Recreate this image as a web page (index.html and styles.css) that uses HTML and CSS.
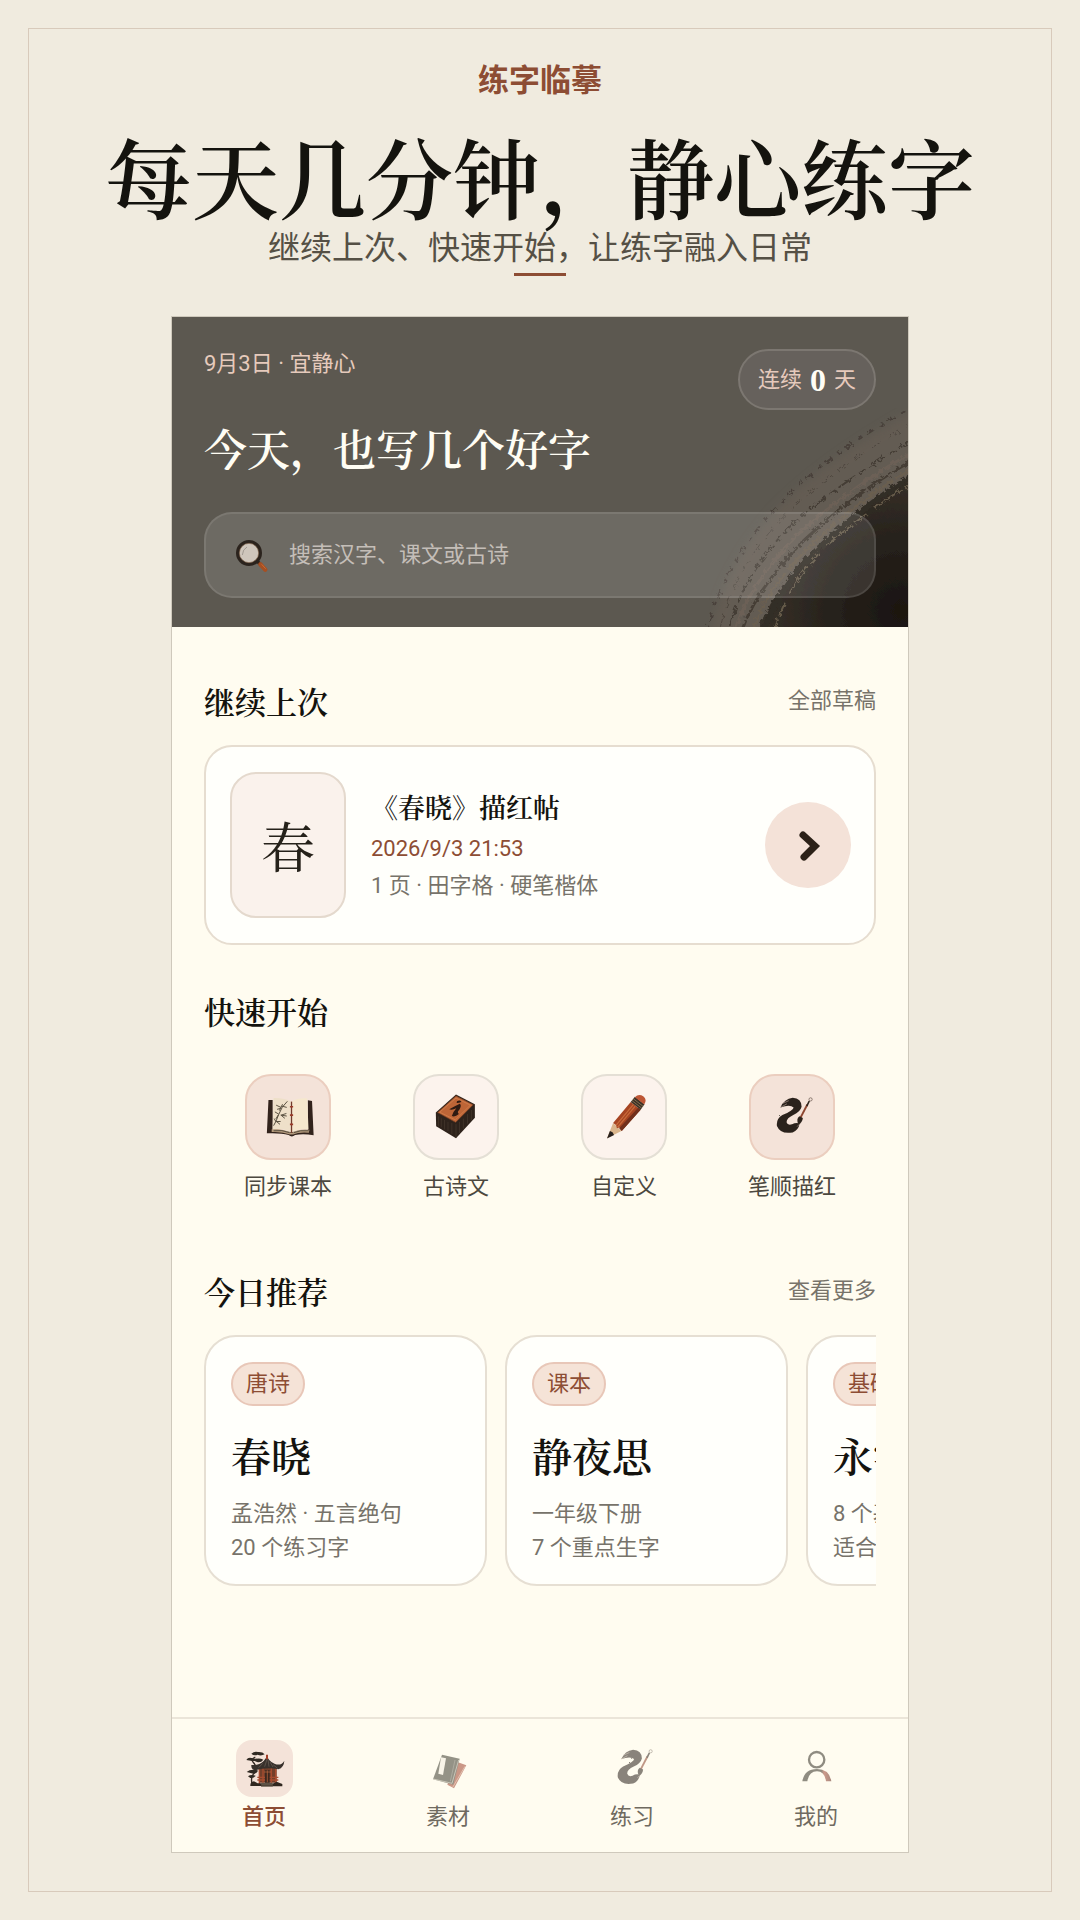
FILE: index.html
```html
<!DOCTYPE html>
<html lang="zh-CN">
<head>
<meta charset="utf-8">
<meta name="viewport" content="width=device-width, initial-scale=1">
<title>练字临摹</title>
<link rel="stylesheet" href="styles.css">
</head>
<body>
<svg class="sprite" aria-hidden="true">
  <defs>
    <filter id="rough" x="-10%" y="-10%" width="120%" height="120%">
      <feTurbulence type="fractalNoise" baseFrequency="0.15" numOctaves="2" seed="4" result="n"/>
      <feDisplacementMap in="SourceGraphic" in2="n" scale="5"/>
    </filter>
    <symbol id="brush" viewBox="0 0 256 256">
      <g filter="url(#rough)">
        <path d="M92 98Q104 71 130 68Q158 70 158 96Q154 112 132 122Q111 132 111 144Q115 156 128 151Q140 144 152 148Q148 169 130 176Q92 183 81 156Q78 134 98 122Q133 107 133 98Q122 88 92 98Z" fill="#2c231c"/>
      </g>
      <path d="M92 98L112 87M98 86L118 77M144 158L154 147" stroke="#b5a094" stroke-width="2"/>
      <path d="M153 133L176 89" stroke="#8d4630" stroke-width="6"/>
      <path d="M174 94L182 78" stroke="#2c231c" stroke-width="5"/>
      <path d="M148 152Q140 134 151 126L162 131Q160 146 148 152Z" fill="#2c231c"/>
      <circle cx="186" cy="73" r="5" fill="none" stroke="#5a4a40" stroke-width="2"/>
    </symbol>
  </defs>
</svg>
<div class="poster">
  <header class="intro">
    <p class="brand">练字临摹</p>
    <h1 class="headline">每天几分钟，静心练字</h1>
    <p class="tagline">继续上次、快速开始，让练字融入日常</p>
    <span class="rule"></span>
  </header>

  <main class="phone">
    <section class="hero">
      <svg class="ink" viewBox="0 0 737 311" preserveAspectRatio="xMaxYMax slice" aria-hidden="true">
        <defs>
          <radialGradient id="inkDark" gradientUnits="userSpaceOnUse" cx="730" cy="295" r="155">
            <stop offset="0" stop-color="#1a1510"/><stop offset=".5" stop-color="#28231d"/><stop offset="1" stop-color="#3b352d"/>
          </radialGradient>
          <filter id="fray" x="-10%" y="-10%" width="120%" height="120%">
            <feTurbulence type="fractalNoise" baseFrequency="0.25" numOctaves="2" seed="8" result="n"/>
            <feDisplacementMap in="SourceGraphic" in2="n" scale="6"/>
            <feGaussianBlur stdDeviation="0.6"/>
          </filter>
          <filter id="grain" x="0" y="0" width="100%" height="100%">
            <feGaussianBlur stdDeviation="5"/>
          </filter>
        </defs>
        <path d="M745 92Q650 145 601 197Q550 255 538 320H610L660 220L745 165Z" fill="#695e55" opacity=".6" filter="url(#grain)"/>
        <g filter="url(#fray)">
          <path d="M750 160Q700 180 660 218Q604 262 580 330H760Z" fill="url(#inkDark)"/>
          <g fill="none" stroke-linecap="round">
            <path d="M745 89Q650 140 600 197Q551 250 536 315" stroke="#48413a" stroke-width="2" stroke-dasharray="7 6 3 9"/>
            <path d="M745 105Q658 154 609 204Q560 257 547 320" stroke="#4e473f" stroke-width="1" stroke-dasharray="12 8"/>
            <path d="M745 122Q668 166 617 212Q568 264 556 320" stroke="#443d35" stroke-width="2" stroke-dasharray="19 5 6 6"/>
            <path d="M745 134Q680 170 626 219Q576 270 562 320" stroke="#6c6157" stroke-width="3"/>
            <path d="M745 142Q684 176 632 225Q582 276 569 320" stroke="#453e35" stroke-width="3" stroke-dasharray="26 4"/>
            <path d="M745 151Q690 181 640 229Q592 275 580 320" stroke="#6a5e50" stroke-width="3" stroke-dasharray="22 6 40 3"/>
            <path d="M745 158Q694 188 648 232Q602 277 592 320" stroke="#332d25" stroke-width="6"/>
            <path d="M745 164Q700 192 655 230Q614 270 602 320" stroke="#655a48" stroke-width="2" stroke-dasharray="13 5 31 12"/>
          </g>
        </g>
      </svg>
      <div class="hero-top">
        <p class="date">9月3日 · 宜静心</p>
        <p class="streak">连续 <strong>0</strong> 天</p>
      </div>
      <h2 class="greeting">今天，也写几个好字</h2>
      <label class="search">
        <svg class="search-icon" viewBox="0 0 120 120" aria-hidden="true">
          <path d="M80 80L90 90" stroke="#30241c" stroke-width="10"/>
          <path d="M88 88L103 104" stroke="#a64f22" stroke-width="13" stroke-linecap="round"/>
          <path d="M92 88L104 101" stroke="#c96d35" stroke-width="3"/>
          <circle cx="54" cy="54" r="34" fill="#cfc6bc" stroke="#2b231d" stroke-width="10"/>
          <path d="M34 60Q35 43 48 36" fill="none" stroke="#a29a92" stroke-width="3"/>
          <circle cx="54" cy="54" r="29" fill="none" stroke="#81644c" stroke-width="2"/>
        </svg>
        <input type="search" placeholder="搜索汉字、课文或古诗" aria-label="搜索">
      </label>
    </section>

    <div class="content">
      <section class="block">
        <div class="block-head"><h3>继续上次</h3><a href="#drafts">全部草稿</a></div>
        <article class="resume">
          <div class="thumb">春</div>
          <div class="resume-info">
            <h4>《春晓》描红帖</h4>
            <time>2026/9/3 21:53</time>
            <p>1 页 · 田字格 · 硬笔楷体</p>
          </div>
          <button class="go" type="button" aria-label="继续">
            <svg viewBox="0 0 86 86" aria-hidden="true"><path d="M38 33L50 44L39 55" fill="none" stroke="#2c2118" stroke-width="7" stroke-linecap="round" stroke-linejoin="miter"/></svg>
          </button>
        </article>
      </section>

      <section class="block quick">
        <div class="block-head"><h3>快速开始</h3></div>
        <nav class="shortcuts">
          <a href="#textbook">
            <span class="tile warm"><svg viewBox="0 0 256 256" aria-hidden="true">
              <path d="M67 75L62 179Q104 177 130 184Q140 193 150 184Q176 179 208 185L203 78L190 76V174H80V75Z" fill="#32231c"/>
              <path d="M77 166Q112 164 139 178Q162 164 195 168L193 177Q162 174 144 183H134Q110 173 77 175Z" fill="#b59b7d"/>
              <path d="M83 69Q116 68 139 80V176Q115 162 80 166Z" fill="#eee0c9"/>
              <path d="M139 80Q160 68 188 70L192 166Q162 164 139 176Z" fill="#f6e8cd"/>
              <path d="M139 80V178" stroke="#713a2a" stroke-width="4"/>
              <path d="M134 96H144M134 122H144M134 151H144" stroke="#9b3d29" stroke-width="5"/>
              <path d="M126 79Q108 95 99 120T83 155M111 88L101 108M109 94L124 98M106 98L91 91M105 101L94 104M99 119L87 112M98 121L90 134M107 122L123 117M107 123L118 132M105 122L124 125M92 142L103 151M91 142L105 142M91 144L85 133M83 171Q110 167 133 177M193 171Q166 168 146 177" fill="none" stroke="#554d3d" stroke-width="3"/>
            </svg></span>同步课本</a>
          <a href="#poems">
            <span class="tile"><svg viewBox="0 0 256 256" aria-hidden="true">
              <path d="M65 114L128 58L187 88V130L128 194L66 157Z" fill="#2e221b"/>
              <path d="M70 114L128 62L182 90L127 145Z" fill="#bd6537" stroke="#5c321e" stroke-width="2"/>
              <path d="M77 113L128 69L173 91L126 137Z" fill="none" stroke="#d88653" stroke-width="2"/>
              <path d="M128 150V191M73 126V157M82 132V160M92 137V167M103 143V172M115 147V181M139 143V178M151 133V164M164 119V149M176 106V138" stroke="#4a3c30" stroke-width="2"/>
              <path d="M131 79Q141 73 145 81Q134 85 130 84ZM107 104Q125 94 140 87Q147 92 138 106Q130 112 137 119Q125 129 115 125Q119 112 129 101Q116 107 107 104Z" fill="#2e1a12"/>
            </svg></span>古诗文</a>
          <a href="#custom">
            <span class="tile"><svg viewBox="0 0 256 256" aria-hidden="true">
              <path d="M94 147L75 194L120 172Z" fill="#dab58c"/>
              <path d="M84 172L75 195L97 184Q94 174 84 172Z" fill="#29211d"/>
              <path d="M94 147L149 81L180 105L121 172L113 161L106 163L103 153Z" fill="#a64422"/>
              <path d="M103 154L159 87M108 160L163 94" stroke="#c86a3a" stroke-width="4"/>
              <path d="M121 172L180 105L172 99L113 163Z" fill="#712f1b"/>
              <path d="M149 81L162 65L192 88L180 105Z" fill="#3a3025"/>
              <path d="M153 77L183 100M157 71L188 95" stroke="#aa9064" stroke-width="2"/>
              <path d="M162 66Q174 54 189 64Q201 75 191 89Z" fill="#bd5635"/>
            </svg></span>自定义</a>
          <a href="#strokes">
            <span class="tile warm"><svg viewBox="0 0 256 256" aria-hidden="true"><use href="#brush"/></svg></span>笔顺描红</a>
        </nav>
      </section>

      <section class="block picks">
        <div class="block-head"><h3>今日推荐</h3><a href="#more">查看更多</a></div>
        <div class="cards">
          <article class="card"><span class="tag">唐诗</span><h4>春晓</h4><p>孟浩然 · 五言绝句<br>20 个练习字</p></article>
          <article class="card"><span class="tag">课本</span><h4>静夜思</h4><p>一年级下册<br>7 个重点生字</p></article>
          <article class="card"><span class="tag">基础</span><h4>永字八法</h4><p>8 个基本笔画<br>适合每日热身</p></article>
        </div>
      </section>
    </div>

    <nav class="tabbar">
      <a class="active" href="#home">
        <svg viewBox="0 0 171 171" aria-hidden="true">
          <path d="M48 132Q43 109 56 98Q65 80 51 66Q44 58 58 51" fill="none" stroke="#352b25" stroke-width="4"/>
          <path d="M46 41Q55 33 66 36Q80 35 86 43Q75 49 65 44Q54 49 46 41ZM31 60Q36 51 47 54L65 57Q56 65 44 62ZM52 61Q66 51 82 59Q75 69 63 66ZM32 96Q43 86 65 91Q66 99 52 101ZM36 109Q45 102 59 107Q54 115 43 114Z" fill="#302a23"/>
          <path d="M69 81H122V128H69Z" fill="#74402b"/>
          <path d="M70 83V132M81 83V132M106 83V132M119 83V132M64 112H127M64 120H127" stroke="#a84d30" stroke-width="4"/>
          <path d="M87 91H101V129H87Z" fill="#3e281f"/><path d="M94 91V127M84 96H105" stroke="#c26b40" stroke-width="2"/>
          <path d="M93 45Q96 64 117 72Q136 78 145 62Q144 82 127 88Q94 80 57 91Q45 88 46 75Q68 77 83 63Q91 56 93 45Z" fill="#37302b"/>
          <path d="M93 58L86 80M96 58L99 80M102 66L111 81M80 70L68 83M111 74L125 85" stroke="#6d6259" stroke-width="2"/>
          <path d="M93 44V58" stroke="#a13e29" stroke-width="6"/>
          <path d="M43 138Q42 126 54 124L65 130H79V138ZM108 132L122 125L139 132V139H108Z" fill="#30271f"/>
          <path d="M77 128H110V140H75Z" fill="#746858"/><path d="M77 132H110M75 137H110" stroke="#30271f" stroke-width="2"/>
        </svg>首页</a>
      <a href="#library">
        <svg class="faded" viewBox="0 0 171 171" aria-hidden="true">
          <path d="M112 66L139 76L102 145L82 134Z" fill="#9f4531"/><path d="M135 79L98 142" stroke="#e5b8a2" stroke-width="2"/>
          <path d="M66 44L119 56L100 134L39 118Z" fill="#3e3d31"/><path d="M40 117L96 130L116 60" fill="none" stroke="#cfc8b7" stroke-width="2"/>
          <path d="M63 52L78 55L69 105L55 101Z" fill="#f4eee3"/><path d="M105 60L91 124" stroke="#858174" stroke-width="2"/>
        </svg>素材</a>
      <a href="#practice"><svg class="faded" viewBox="37 37 182 182" aria-hidden="true"><use href="#brush" width="256" height="256"/></svg>练习</a>
      <a href="#me">
        <svg class="faded" viewBox="0 0 171 171" aria-hidden="true">
          <defs><linearGradient id="shoulder"><stop offset=".65" stop-color="#353127"/><stop offset=".75" stop-color="#a54b39"/><stop offset="1" stop-color="#612b22"/></linearGradient></defs>
          <circle cx="86" cy="59" r="23" fill="none" stroke="#353127" stroke-width="7"/>
          <path d="M43 124Q49 87 87 87Q124 87 130 124H114Q110 94 87 94Q63 94 58 124Z" fill="url(#shoulder)"/>
        </svg>我的</a>
    </nav>
  </main>
</div>
</body>
</html>
```
FILE: styles.css
```css
* { box-sizing: border-box; }

body {
  margin: 0;
  padding: 28px;
  min-height: 100vh;
  display: flex;
  background: #f0ebdf;
  color: #14130e;
  font-family: Roboto, "Noto Sans CJK SC", sans-serif;
  font-size: 22px;
  line-height: 34px;
}

h1, h2, h3, h4, p { margin: 0; }
a { color: inherit; text-decoration: none; }
.sprite { position: absolute; width: 0; height: 0; }

.poster {
  flex: 1;
  min-width: 0;
  padding: 28px 24px 38px;
  border: 1px solid #d8cabb;
  display: flex;
  flex-direction: column;
  align-items: center;
}

.intro {
  display: flex;
  flex-direction: column;
  align-items: center;
  text-align: center;
}
.brand { color: #8d4d34; font-size: 31px; line-height: 48px; font-weight: 600; }
.headline, .greeting, .block-head h3, .resume h4, .card h4, .thumb {
  font-family: "Noto Serif CJK SC", "Noto Sans CJK SC", serif;
}
.headline { margin-top: 21px; font-size: 87px; line-height: 100px; font-weight: 600; white-space: nowrap; }
.tagline { margin-top: 2px; color: #555045; font-size: 32px; line-height: 40px; }
.rule { width: 52px; height: 3px; margin-top: 5px; background: #8d4d34; }

.phone {
  width: 100%;
  max-width: 738px;
  margin-top: 40px;
  border: 1px solid #cfc9bc;
  background: #fffcf0;
  flex: 1;
  display: flex;
  flex-direction: column;
}

.hero {
  position: relative;
  padding: 32px 32px 29px;
  background: #5c5850;
  display: flex;
  flex-direction: column;
}
.ink { position: absolute; inset: 0; width: 100%; height: 100%; }
.hero-top, .greeting, .search { position: relative; }
.hero-top { display: flex; justify-content: space-between; align-items: flex-start; color: #e6cabc; }
.date { line-height: 30px; }
.streak {
  display: flex;
  align-items: center;
  gap: 8px;
  height: 61px;
  padding: 0 18px;
  border: 2px solid #7c7771;
  border-radius: 31px;
  background: #66615c;
}
.streak strong { color: #fffdf6; font-family: "Liberation Serif", serif; font-size: 32px; }
.greeting { margin-top: 8px; color: #fffdf4; font-size: 43px; line-height: 60px; font-weight: 600; }
.search {
  margin-top: 34px;
  min-height: 86px;
  padding: 0 25px;
  display: flex;
  align-items: center;
  gap: 18px;
  border: 2px solid #ffffff18;
  border-radius: 28px;
  background: #ffffff1c;
}
.search-icon { width: 40px; height: 40px; flex: none; }
.search input {
  flex: 1;
  min-width: 0;
  height: 34px;
  border: 0;
  padding: 0;
  outline: 0;
  background: none;
  color: #fffdf4;
  font: inherit;
}
.search input::placeholder { color: #c4beb8; opacity: 1; }

.content { padding: 52px 32px 40px; display: flex; flex-direction: column; }
.block-head { display: flex; justify-content: space-between; align-items: flex-start; height: 48px; line-height: 44px; }
.block-head h3 { font-size: 31px; font-weight: 600; }
.block-head a { color: #77736a; }

.resume {
  margin-top: 18px;
  min-height: 200px;
  padding: 24px;
  padding-right: 23px;
  display: flex;
  align-items: center;
  border: 2px solid #e6ddd0;
  border-radius: 28px;
  background: #fffffb;
}
.thumb {
  width: 116px;
  height: 146px;
  flex: none;
  display: grid;
  place-items: center;
  border: 2px solid #e4d9cd;
  border-radius: 26px;
  background: #faf2ec;
  color: #25211a;
  font-size: 54px;
}
.resume-info { flex: 1; min-width: 0; margin-left: 25px; color: #77736a; line-height: 38px; }
.resume h4 { margin-bottom: 3px; color: #14130e; font-size: 27px; line-height: 42px; font-weight: 600; }
.resume time { display: block; color: #8d4d34; line-height: 36px; }
.go { width: 86px; height: 86px; flex: none; padding: 0; border: 0; border-radius: 50%; background: #f4e2d8; }
.go svg { display: block; width: 100%; }

.quick { margin-top: 44px; }
.shortcuts { margin-top: 37px; display: grid; grid-template-columns: repeat(4, 1fr); }
.shortcuts a {
  display: flex;
  flex-direction: column;
  align-items: center;
  gap: 10px;
  color: #4c483f;
}
.tile { width: 86px; height: 86px; border: 2px solid #e4dfd5; border-radius: 26px; background: #fcf3ed; }
.tile.warm { border-color: #ebcebf; background: #f4e3d9; }
.tile svg { display: block; width: 100%; }

.picks { margin-top: 65px; }
.cards { margin-top: 18px; display: flex; gap: 18px; overflow: hidden; }
.card {
  flex: 0 0 283px;
  padding: 25px;
  border: 2px solid #e6dfd3;
  border-radius: 32px;
  background: #fffffb;
}
.tag {
  display: inline-block;
  padding: 0 13px;
  border: 2px solid #e8c7b8;
  border-radius: 22px;
  background: #f5e3d7;
  color: #8d4d34;
  line-height: 40px;
}
.card h4 { margin-top: 16px; font-size: 40px; line-height: 66px; font-weight: 600; }
.card p { height: 62px; margin-top: 9px; overflow: hidden; color: #77736a; white-space: nowrap; }

.tabbar {
  margin-top: auto;
  padding: 21px 0 18px;
  display: grid;
  grid-template-columns: repeat(4, 1fr);
  border-top: 2px solid #ebe5d9;
}
.tabbar a { display: flex; flex-direction: column; align-items: center; gap: 3px; color: #6f6a60; }
.tabbar svg { width: 57px; height: 57px; border-radius: 16px; }
.tabbar .active { color: #8d4d34; font-weight: 500; }
.tabbar .active svg { background: #f4e3d9; }
.faded { opacity: .55; }
```
